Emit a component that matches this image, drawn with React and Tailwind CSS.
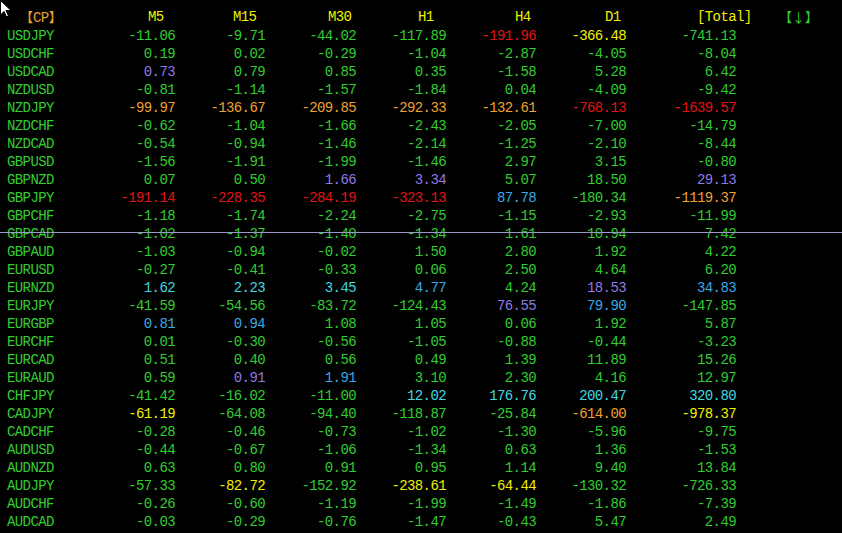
const C = {
  G: 'text-[#32cd32]',
  Y: 'text-[#f0f000]',
  O: 'text-[#f0a030]',
  R: 'text-[#e01414]',
  P: 'text-[#8c7ae6]',
  B: 'text-[#3aa8e8]',
  T: 'text-[#40d8e0]',
}

// symbol, then value:colour pairs for M5 M15 M30 H1 H4 D1 Total
const rows = [
  ['USDJPY', '-11.06 G', '-9.71 G', '-44.02 G', '-117.89 G', '-191.96 R', '-366.48 Y', '-741.13 G'],
  ['USDCHF', '0.19 G', '0.02 G', '-0.29 G', '-1.04 G', '-2.87 G', '-4.05 G', '-8.04 G'],
  ['USDCAD', '0.73 P', '0.79 G', '0.85 G', '0.35 G', '-1.58 G', '5.28 G', '6.42 G'],
  ['NZDUSD', '-0.81 G', '-1.14 G', '-1.57 G', '-1.84 G', '0.04 G', '-4.09 G', '-9.42 G'],
  ['NZDJPY', '-99.97 O', '-136.67 O', '-209.85 O', '-292.33 O', '-132.61 O', '-768.13 R', '-1639.57 R'],
  ['NZDCHF', '-0.62 G', '-1.04 G', '-1.66 G', '-2.43 G', '-2.05 G', '-7.00 G', '-14.79 G'],
  ['NZDCAD', '-0.54 G', '-0.94 G', '-1.46 G', '-2.14 G', '-1.25 G', '-2.10 G', '-8.44 G'],
  ['GBPUSD', '-1.56 G', '-1.91 G', '-1.99 G', '-1.46 G', '2.97 G', '3.15 G', '-0.80 G'],
  ['GBPNZD', '0.07 G', '0.50 G', '1.66 P', '3.34 P', '5.07 G', '18.50 G', '29.13 P'],
  ['GBPJPY', '-191.14 R', '-228.35 R', '-284.19 R', '-323.13 R', '87.78 B', '-180.34 G', '-1119.37 O'],
  ['GBPCHF', '-1.18 G', '-1.74 G', '-2.24 G', '-2.75 G', '-1.15 G', '-2.93 G', '-11.99 G'],
  ['GBPCAD', '-1.02 G', '-1.37 G', '-1.40 G', '-1.34 G', '1.61 G', '10.94 G', '7.42 G'],
  ['GBPAUD', '-1.03 G', '-0.94 G', '-0.02 G', '1.50 G', '2.80 G', '1.92 G', '4.22 G'],
  ['EURUSD', '-0.27 G', '-0.41 G', '-0.33 G', '0.06 G', '2.50 G', '4.64 G', '6.20 G'],
  ['EURNZD', '1.62 T', '2.23 T', '3.45 T', '4.77 B', '4.24 G', '18.53 P', '34.83 B'],
  ['EURJPY', '-41.59 G', '-54.56 G', '-83.72 G', '-124.43 G', '76.55 P', '79.90 B', '-147.85 G'],
  ['EURGBP', '0.81 B', '0.94 B', '1.08 G', '1.05 G', '0.06 G', '1.92 G', '5.87 G'],
  ['EURCHF', '0.01 G', '-0.30 G', '-0.56 G', '-1.05 G', '-0.88 G', '-0.44 G', '-3.23 G'],
  ['EURCAD', '0.51 G', '0.40 G', '0.56 G', '0.49 G', '1.39 G', '11.89 G', '15.26 G'],
  ['EURAUD', '0.59 G', '0.91 P', '1.91 B', '3.10 G', '2.30 G', '4.16 G', '12.97 G'],
  ['CHFJPY', '-41.42 G', '-16.02 G', '-11.00 G', '12.02 T', '176.76 T', '200.47 T', '320.80 T'],
  ['CADJPY', '-61.19 Y', '-64.08 G', '-94.40 G', '-118.87 G', '-25.84 G', '-614.00 O', '-978.37 Y'],
  ['CADCHF', '-0.28 G', '-0.46 G', '-0.73 G', '-1.02 G', '-1.30 G', '-5.96 G', '-9.75 G'],
  ['AUDUSD', '-0.44 G', '-0.67 G', '-1.06 G', '-1.34 G', '0.63 G', '1.36 G', '-1.53 G'],
  ['AUDNZD', '0.63 G', '0.80 G', '0.91 G', '0.95 G', '1.14 G', '9.40 G', '13.84 G'],
  ['AUDJPY', '-57.33 G', '-82.72 Y', '-152.92 G', '-238.61 Y', '-64.44 Y', '-130.32 G', '-726.33 G'],
  ['AUDCHF', '-0.26 G', '-0.60 G', '-1.19 G', '-1.99 G', '-1.49 G', '-1.86 G', '-7.39 G'],
  ['AUDCAD', '-0.03 G', '-0.29 G', '-0.76 G', '-1.47 G', '-0.43 G', '5.47 G', '2.49 G'],
]

const cols = 'grid grid-cols-[85px_90px_90px_91px_90px_90px_90px_110px_1fr]'
const cjk = { fontFamily: '"Noto Sans CJK JP", sans-serif' }

export default function App() {
  return (
    <div
      className="relative w-[842px] h-[533px] overflow-hidden bg-black text-[14px] tracking-[-0.6px] leading-[18px] pt-[8px]"
      style={{ fontFamily: '"Liberation Mono", "Noto Sans CJK JP", monospace' }}
    >
      {/* header */}
      <div className={cols + ' text-[#f0f000]'}>
        <div className="pl-[20px] text-[#f0a030] whitespace-nowrap">
          <span style={cjk} className="text-[13px] tracking-normal">【</span>CP<span style={cjk} className="text-[13px] tracking-normal">】</span>
        </div>
        <div className="pl-[63px]">M5</div>
        <div className="pl-[58px]">M15</div>
        <div className="pl-[63px]">M30</div>
        <div className="pl-[62px]">H1</div>
        <div className="pl-[69px]">H4</div>
        <div className="pl-[69px]">D1</div>
        <div className="pl-[71px]">[Total]</div>
        <div style={cjk} className="pl-[43px] text-[13px] tracking-normal text-[#32cd32] whitespace-nowrap">【↓】</div>
      </div>

      {rows.map(([sym, ...vals]) => (
        <div key={sym} className={cols}>
          <div className="pl-[7px] text-[#32cd32]">{sym}</div>
          {vals.map((v, i) => {
            const [num, c] = v.split(' ')
            return (
              <div key={i} className={'text-right ' + C[c]}>
                {num}
              </div>
            )
          })}
          <div />
        </div>
      ))}

      {/* horizontal line object */}
      <div className="absolute left-0 right-0 top-[232px] h-px bg-[#9a98c8]" />

      {/* mouse cursor */}
      <svg className="absolute left-0 top-0" width="14" height="20" viewBox="0 0 14 20">
        <path d="M0.5 0.5 L0.5 15 L4 11.5 L6.5 17 L8.5 16 L6 10.5 L11 10.5 Z" fill="#fff" stroke="#000" strokeWidth="1" />
      </svg>
    </div>
  )
}
